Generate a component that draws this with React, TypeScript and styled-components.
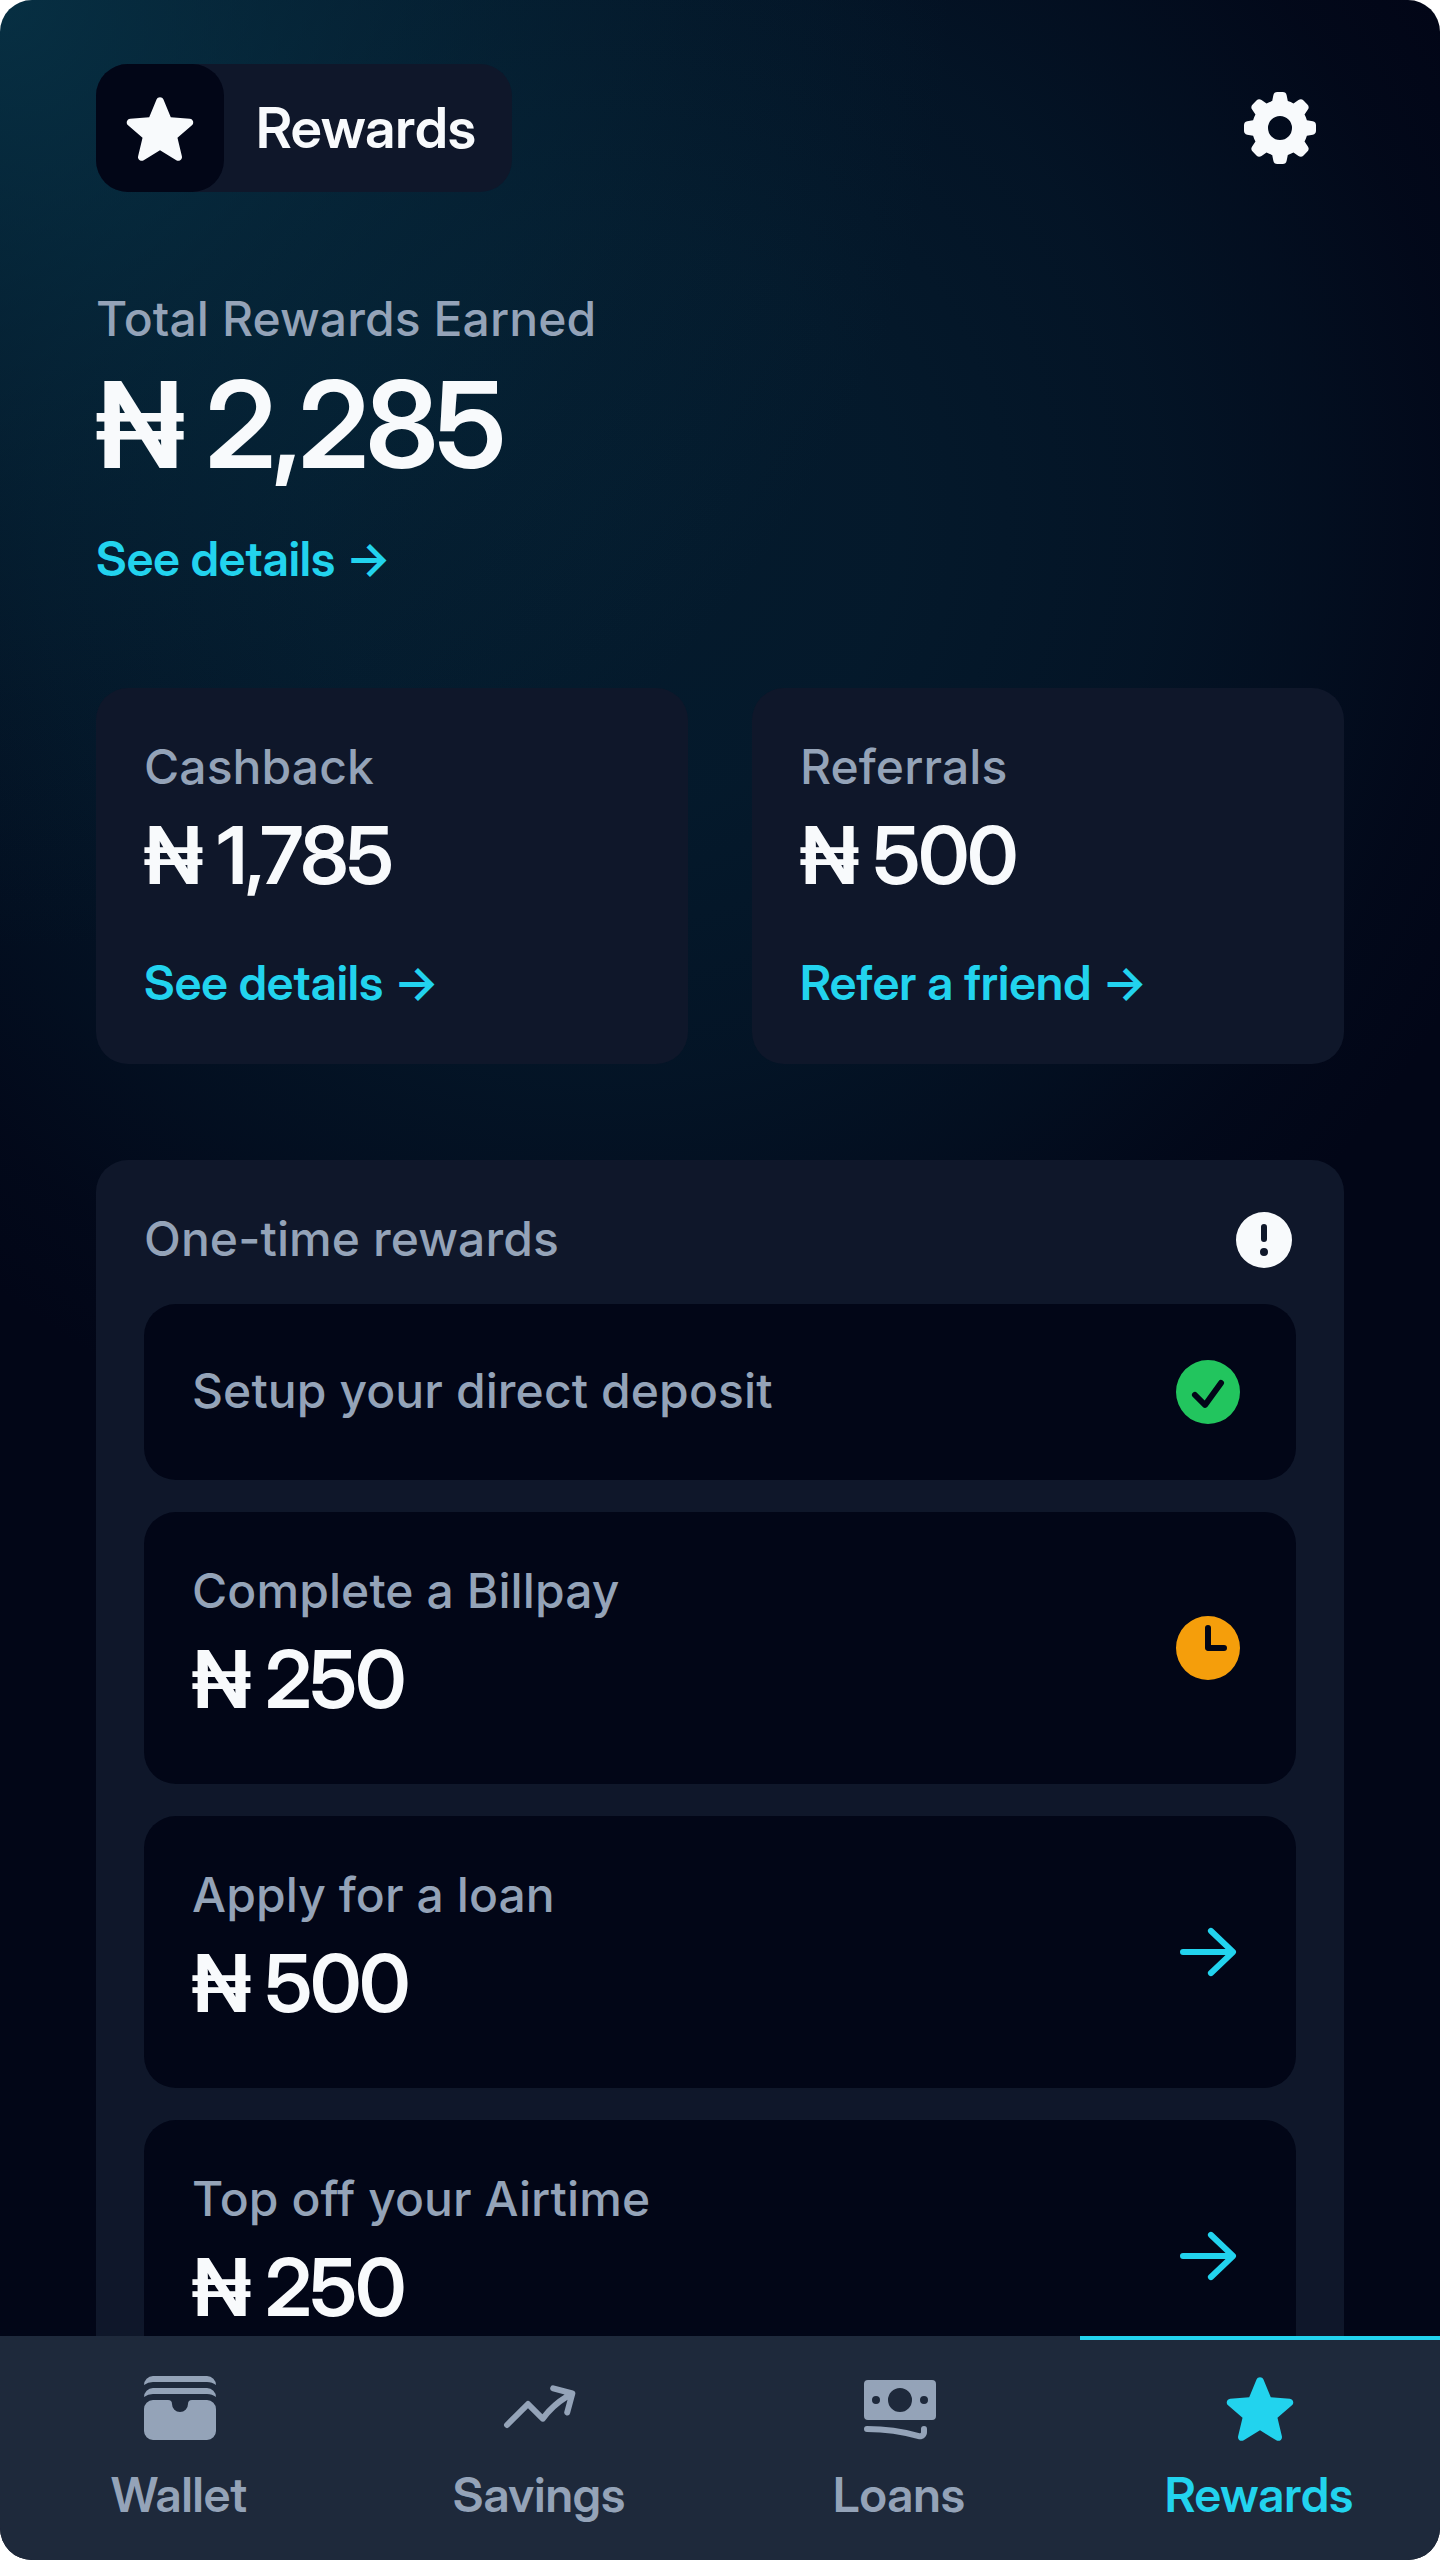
import React from 'react';
import styled, { createGlobalStyle } from 'styled-components';
import {
  HiMiniArrowRight,
  HiMiniArrowTrendingUp,
  HiMiniBanknotes,
  HiMiniCheckCircle,
  HiMiniClock,
  HiMiniCog8Tooth,
  HiMiniStar,
  HiMiniWallet,
} from 'react-icons/hi2';

const color = {
  base: '#020617',
  surface: '#0f172a',
  bar: '#1e293b',
  muted: '#94a3b8',
  text: '#f8fafc',
  accent: '#22d3ee',
  success: '#22c55e',
  pending: '#f59e0b',
};

const GlobalStyle = createGlobalStyle`
  * { box-sizing: border-box; }
  body { margin: 0; background: #fff; }
  button { font: inherit; color: inherit; background: none; border: 0; padding: 0; }
`;

const glow = (a: number) => `rgba(8, 58, 78, ${a})`;

const Screen = styled.div`
  width: 1440px;
  height: 2560px;
  display: flex;
  flex-direction: column;
  overflow: hidden;
  border-radius: 32px;
  color: ${color.text};
  font-family: 'Inter Display', Inter, 'Liberation Sans', sans-serif;
  font-variation-settings: 'opsz' 32;
  background:
    radial-gradient(circle 950px at 0 0, ${glow(0.77)} 0, ${glow(0.42)} 340px, ${glow(0.28)} 500px, ${glow(0.13)} 700px, ${glow(0)} 950px),
    radial-gradient(circle 980px at 600px 520px, ${glow(0.4)} 0, ${glow(0.37)} 290px, ${glow(0.27)} 560px, ${glow(0.16)} 720px, ${glow(0.05)} 860px, ${glow(0)} 980px),
    ${color.base};
`;

const Content = styled.main`
  flex: 1;
  min-height: 0;
  overflow: hidden;
  padding: 64px 96px 0;
`;

const Header = styled.header`
  display: flex;
  align-items: center;
  justify-content: space-between;
`;

const TitleBadge = styled.div`
  display: flex;
  align-items: center;
  padding-right: 36px;
  border-radius: 32px;
  background: ${color.surface};
`;

const TitleIcon = styled.span`
  display: flex;
  align-items: center;
  justify-content: center;
  width: 128px;
  height: 128px;
  margin-right: 32px;
  border-radius: 32px;
  background: ${color.base};
`;

const Title = styled.h1`
  margin: 0;
  font-size: 56px;
  line-height: 80px;
  font-weight: 600;
`;

const IconButton = styled.button`
  display: flex;
  padding: 24px;
`;

const Label = styled.div`
  padding-bottom: 3px;
  font-family: Inter, 'Liberation Sans', sans-serif;
  font-variation-settings: 'opsz' 14;
  font-size: 48px;
  line-height: 61px;
  font-weight: 480;
  letter-spacing: 0.1px;
  color: ${color.muted};
`;

const Amount = styled.div<{ $large?: boolean }>`
  height: ${(p) => (p.$large ? 144 : 112)}px;
  font-size: ${(p) => (p.$large ? 120 : 80)}px;
  line-height: ${(p) => (p.$large ? 145 : 109)}px;
  font-weight: 600;
  letter-spacing: -0.025em;
`;

const Link = styled.a`
  display: block;
  padding-bottom: 3px;
  font-size: 48px;
  line-height: 61px;
  font-weight: 600;
  color: ${color.accent};
`;

const Summary = styled.section`
  display: flex;
  flex-direction: column;
  margin-top: 96px;

  ${Link} { margin-top: 32px; }
`;

const Cards = styled.section`
  display: grid;
  grid-template-columns: 1fr 1fr;
  gap: 64px;
  margin-top: 96px;
`;

const Card = styled.article`
  padding: 48px;
  border-radius: 32px;
  background: ${color.surface};

  ${Link} { margin-top: 40px; }
`;

const Panel = styled.section`
  display: flex;
  flex-direction: column;
  gap: 32px;
  margin-top: 96px;
  padding: 48px;
  border-radius: 32px;
  background: ${color.surface};
`;

const PanelHead = styled.div`
  display: flex;
  align-items: center;
  justify-content: space-between;
`;

const Row = styled.div`
  display: flex;
  align-items: center;
  justify-content: space-between;
  padding: 48px;
  border-radius: 32px;
  background: ${color.base};
`;

const Status = styled.span<{ $tone: string }>`
  display: flex;
  color: ${(p) => p.$tone};
`;

const TabBar = styled.nav`
  flex: none;
  height: 224px;
  display: grid;
  grid-template-columns: repeat(4, 1fr);
  background: ${color.bar};
`;

const Tab = styled.button<{ $active?: boolean }>`
  display: flex;
  flex-direction: column;
  align-items: center;
  padding-top: 32px;
  gap: 16px;
  font-size: 48px;
  line-height: 61px;
  font-weight: 600;
  color: ${(p) => (p.$active ? color.accent : color.muted)};
  box-shadow: ${(p) => (p.$active ? `inset 0 4px 0 ${color.accent}` : 'none')};
`;

const TabLabel = styled.span`
  padding-right: 2px;
`;

const InfoIcon = () => (
  <svg width="64" height="64" viewBox="0 0 16 16" fill="currentColor">
    <path
      fillRule="evenodd"
      clipRule="evenodd"
      d="M8 15A7 7 0 1 0 8 1a7 7 0 0 0 0 14ZM8 4a.75.75 0 0 1 .75.75v3a.75.75 0 0 1-1.5 0v-3A.75.75 0 0 1 8 4Zm0 8a1 1 0 1 0 0-2 1 1 0 0 0 0 2Z"
    />
  </svg>
);

const rewards = [
  { label: 'Setup your direct deposit', icon: HiMiniCheckCircle, tone: color.success },
  { label: 'Complete a Billpay', amount: '250', icon: HiMiniClock, tone: color.pending },
  { label: 'Apply for a loan', amount: '500', icon: HiMiniArrowRight, tone: color.accent },
  { label: 'Top off your Airtime', amount: '250', icon: HiMiniArrowRight, tone: color.accent },
];

const tabs = [
  { label: 'Wallet', icon: HiMiniWallet },
  { label: 'Savings', icon: HiMiniArrowTrendingUp },
  { label: 'Loans', icon: HiMiniBanknotes },
  { label: 'Rewards', icon: HiMiniStar, active: true },
];

export default function App() {
  return (
    <>
      <GlobalStyle />
      <Screen>
        <Content>
          <Header>
            <TitleBadge>
              <TitleIcon><HiMiniStar size={80} /></TitleIcon>
              <Title>Rewards</Title>
            </TitleBadge>
            <IconButton aria-label="Settings"><HiMiniCog8Tooth size={80} /></IconButton>
          </Header>

          <Summary>
            <Label>Total Rewards Earned</Label>
            <Amount $large>₦ 2,285</Amount>
            <Link>See details →</Link>
          </Summary>

          <Cards>
            <Card>
              <Label>Cashback</Label>
              <Amount>₦ 1,785</Amount>
              <Link>See details →</Link>
            </Card>
            <Card>
              <Label>Referrals</Label>
              <Amount>₦ 500</Amount>
              <Link>Refer a friend →</Link>
            </Card>
          </Cards>

          <Panel>
            <PanelHead>
              <Label>One-time rewards</Label>
              <InfoIcon />
            </PanelHead>
            {rewards.map(({ label, amount, icon: Icon, tone }) => (
              <Row key={label}>
                <div>
                  <Label>{label}</Label>
                  {amount && <Amount>₦ {amount}</Amount>}
                </div>
                <Status $tone={tone}><Icon size={80} /></Status>
              </Row>
            ))}
          </Panel>
        </Content>

        <TabBar>
          {tabs.map(({ label, icon: Icon, active }) => (
            <Tab key={label} $active={active}>
              <Icon size={80} />
              <TabLabel>{label}</TabLabel>
            </Tab>
          ))}
        </TabBar>
      </Screen>
    </>
  );
}
